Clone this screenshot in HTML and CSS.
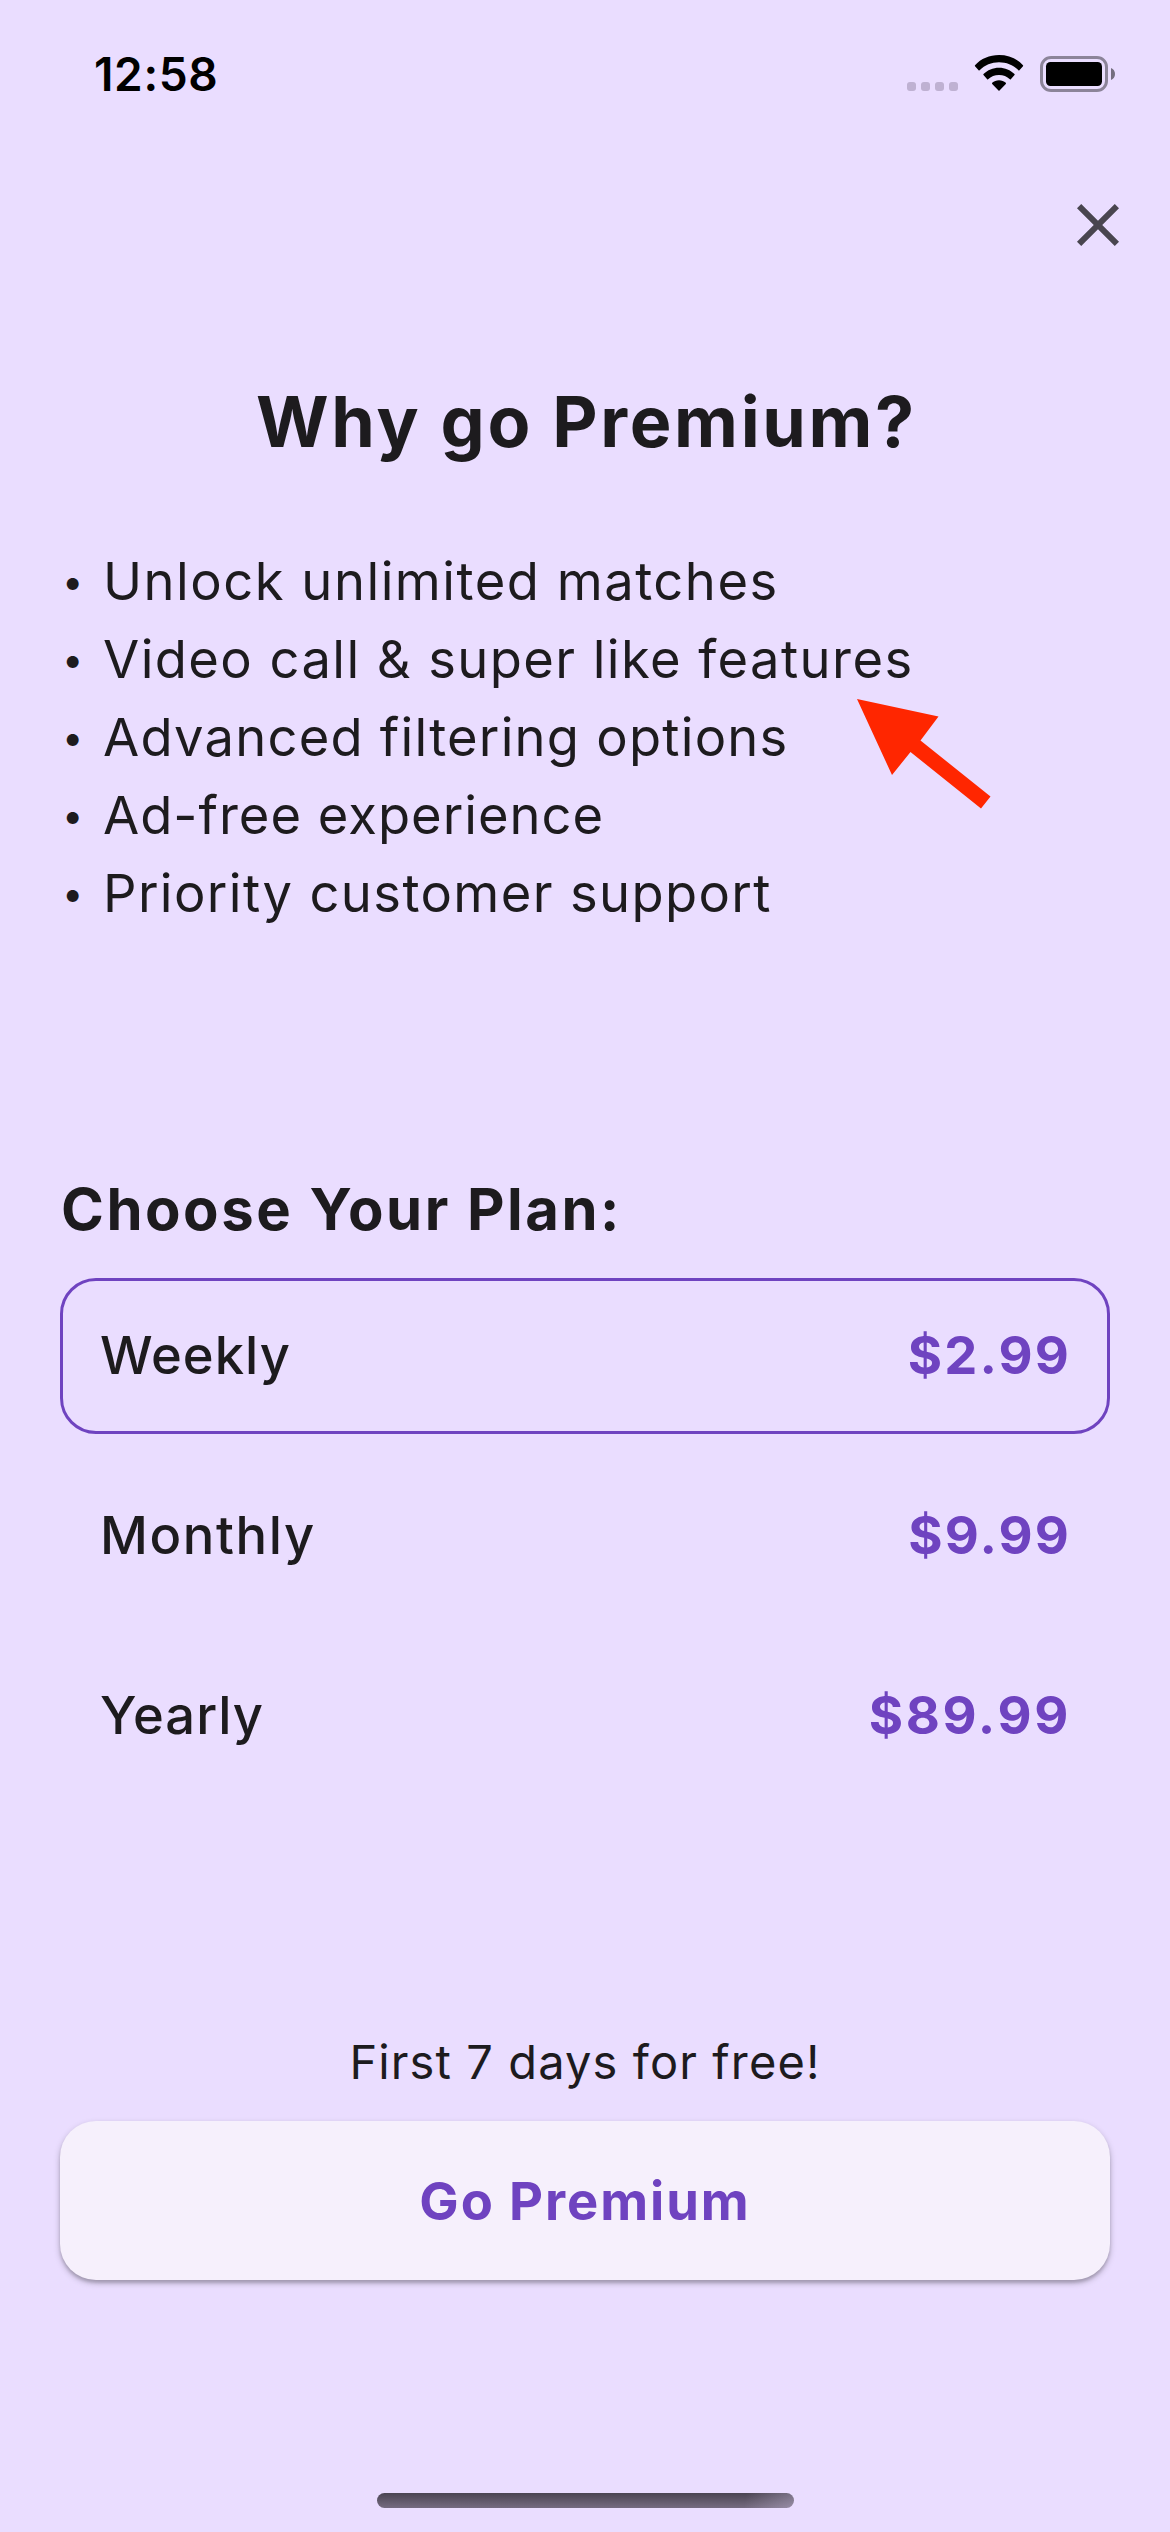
FILE: index.html
```html
<!DOCTYPE html>
<html lang="en">
<head>
<meta charset="utf-8">
<title>Go Premium</title>
<link rel="stylesheet" href="styles.css">
</head>
<body>
<div class="screen">
  <header class="status">
    <span class="time">12:58</span>
    <div class="indicators">
      <div class="signal"><i></i><i></i><i></i><i></i></div>
      <svg class="wifi" width="48" height="36" viewBox="0 0 48 36">
        <path d="M24 0C33.500 0 42 3.600 48 10.300 48.200 10.500 48.200 11 48 11.300L44.400 15.200C44.100 15.500 43.700 15.500 43.400 15.200 38.200 10.200 31.500 7.300 24 7.300S9.800 10.200 4.600 15.200C4.300 15.500 3.900 15.500 3.600 15.200L0 11.300C-.2 11 -.2 10.500 0 10.300 6 3.600 14.500 0 24 0Z"/>
        <path d="M24 12.800C30 12.800 35.500 15.100 39.500 19.100 39.800 19.400 39.800 19.700 39.500 20L35.800 24.200C35.500 24.500 35.200 24.500 34.900 24.200 32 21.500 28.200 20 24 20S16 21.500 13.100 24.200C12.800 24.500 12.500 24.500 12.200 24.200L8.500 20C8.200 19.700 8.200 19.400 8.500 19.100 12.500 15.100 18 12.800 24 12.800Z"/>
        <path d="M24 25.300C26.600 25.300 29 26.200 30.800 27.800 31.100 28.100 31.100 28.600 30.800 28.900L24.500 35.600C24.200 35.900 23.800 35.900 23.500 35.600L17.200 28.900C16.900 28.600 16.900 28.100 17.200 27.800 19 26.200 21.400 25.300 24 25.300Z"/>
      </svg>
      <svg class="battery" width="75" height="36" viewBox="0 0 75 36">
        <rect x="1.500" y="1.500" width="65" height="33" rx="9.500" fill="none" stroke="#000" stroke-width="3" opacity=".4"/>
        <rect x="6" y="6" width="56" height="24" rx="4.500"/>
        <path d="M71 12C73.500 13 75 15.300 75 18S73.500 23 71 24Z" opacity=".5"/>
      </svg>
    </div>
  </header>

  <div class="toolbar">
    <svg width="72" height="72" viewBox="0 0 24 24" role="button" aria-label="Close">
      <path fill="#49454f" d="M19 6.410 17.590 5 12 10.590 6.410 5 5 6.410 10.590 12 5 17.590 6.410 19 12 13.410 17.590 19 19 17.590 13.410 12z"/>
    </svg>
  </div>

  <h1 class="title">Why go Premium?</h1>

  <div class="benefits">
    <ul class="list">
      <li><span class="dot">•</span><span>Unlock unlimited matches</span></li>
      <li><span class="dot">•</span><span>Video call &amp; super like features</span></li>
      <li><span class="dot">•</span><span>Advanced filtering options</span></li>
      <li><span class="dot">•</span><span>Ad-free experience</span></li>
      <li><span class="dot">•</span><span>Priority customer support</span></li>
    </ul>
    <svg class="arrow" width="134" height="110" viewBox="857 699 134 110">
      <path fill="#ff2600" d="M857 699 938.500 716.500 920.500 740.500 990.500 796.500 981 808.500 910.500 752 892 775Z"/>
    </svg>
  </div>

  <h2 class="plan-heading">Choose Your Plan:</h2>
  <div class="plans">
    <div class="plan selected"><span class="name">Weekly</span><span class="price">$2.99</span></div>
    <div class="plan"><span class="name monthly">Monthly</span><span class="price">$9.99</span></div>
    <div class="plan"><span class="name">Yearly</span><span class="price wide">$89.99</span></div>
  </div>

  <p class="trial">First 7 days for free!</p>
  <button class="cta">Go Premium</button>

  <div class="home-bar"></div>
</div>
</body>
</html>
```
FILE: styles.css
```css
* { box-sizing: border-box; margin: 0; padding: 0; }

body {
  background: #eaddff;
  color: #1d1b1e;
  font-family: Inter, "Liberation Sans", sans-serif;
}

.screen {
  display: flex;
  flex-direction: column;
  width: 1170px;
  height: 2532px;
  padding: 0 60px;
  overflow: hidden;
}

.status {
  display: flex;
  justify-content: space-between;
  align-items: flex-start;
  height: 189px;
  padding: 44px 0 0 34px;
  margin-right: -5px;
  color: #000;
}

.time {
  font-size: 46px;
  font-weight: 600;
  line-height: 60px;
  letter-spacing: 0.65px;
}

.indicators { display: flex; gap: 17px; padding-top: 11px; }

.signal { display: flex; gap: 5px; padding-top: 27px; }
.signal i { width: 9px; height: 9px; border-radius: 3px; background: #bfb1d2; }

.wifi { display: block; overflow: visible; }
.battery { display: block; margin-top: 1px; }

.toolbar {
  display: flex;
  justify-content: flex-end;
  height: 72px;
  margin-right: -24px;
}

.title {
  margin-top: 119px;
  padding-left: 3px;
  font-size: 70px;
  font-weight: 700;
  line-height: 84px;
  letter-spacing: 2.67px;
  text-align: center;
  white-space: nowrap;
}

.benefits { position: relative; margin-top: 78px; }

.list { list-style: none; }

.list li {
  display: flex;
  font-size: 52.5px;
  line-height: 78px;
  letter-spacing: 1.5px;
  white-space: nowrap;
}
.list li:nth-child(2) { letter-spacing: 1.42px; }
.list li:nth-child(3) { letter-spacing: 1.22px; }
.list li:nth-child(4) { letter-spacing: 1px; }
.list li:nth-child(5) { letter-spacing: 1.38px; }

.dot {
  width: 43px;
  padding-left: 2px;
  font-size: 38px;
  letter-spacing: 0;
}

.arrow { position: absolute; left: 797px; top: 157px; }

.plan-heading {
  margin-top: 242px;
  padding-left: 1px;
  font-size: 58px;
  font-weight: 700;
  line-height: 70px;
  letter-spacing: 2.5px;
}

.plans { display: flex; flex-direction: column; gap: 24px; margin-top: 34px; }

.plan {
  display: flex;
  justify-content: space-between;
  align-items: center;
  height: 156px;
  padding: 0 36px 2px 37px;
  border: 3px solid transparent;
  border-radius: 36px;
  font-size: 52.5px;
}
.plan.selected { border-color: #6f43c0; }

.name { font-weight: 500; letter-spacing: 1px; }
.name.monthly { letter-spacing: 1.6px; }
.price { font-weight: 700; letter-spacing: 2.15px; color: #6f43c0; }
.price.wide { letter-spacing: 2.69px; }

.trial {
  margin-top: 239px;
  font-size: 47px;
  line-height: 58px;
  letter-spacing: 1.11px;
  text-align: center;
}

.cta {
  flex: none;
  height: 159px;
  margin-top: 30px;
  border: 0;
  border-radius: 36px;
  background: #f6f0fc;
  box-shadow: 0 3px 6px rgba(0, 0, 0, 0.25), 0 3px 3px rgba(0, 0, 0, 0.12);
  color: #6f43c0;
  font: 700 52.5px/64px Inter, "Liberation Sans", sans-serif;
  letter-spacing: 1.92px;
}

.home-bar {
  align-self: center;
  width: 417px;
  height: 15px;
  margin-top: 213px;
  border-radius: 8px;
  background: linear-gradient(100deg, transparent 88%, rgba(234, 221, 255, 0.3)), linear-gradient(#4b4452, #756b80);
}
```
